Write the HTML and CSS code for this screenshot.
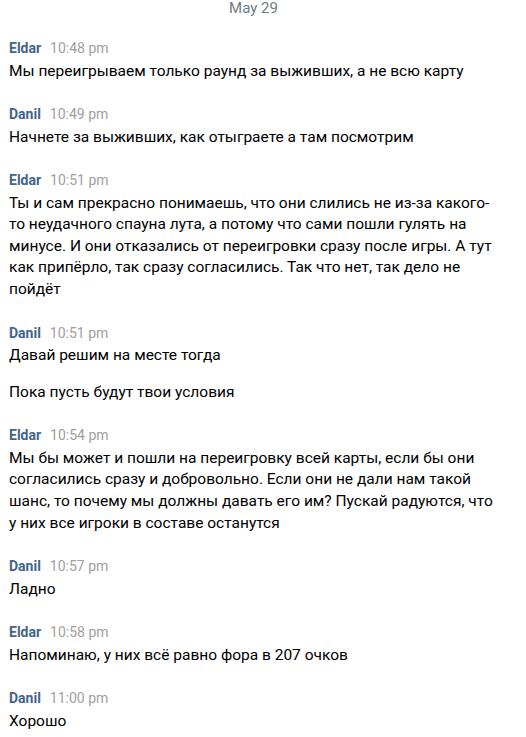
FILE: index.html
```html
<!DOCTYPE html>
<html lang="ru">
<head>
<meta charset="utf-8">
<link rel="stylesheet" href="styles.css">
</head>
<body>
<div class="chat">
  <div class="date">May 29</div>

  <div class="msg">
    <div class="head"><span class="name">Eldar</span><span class="time">10:48 pm</span></div>
    <p class="text">Мы переигрываем только раунд за выживших, а не всю карту</p>
  </div>

  <div class="msg">
    <div class="head"><span class="name">Danil</span><span class="time">10:49 pm</span></div>
    <p class="text">Начнете за выживших, как отыграете а там посмотрим</p>
  </div>

  <div class="msg">
    <div class="head"><span class="name">Eldar</span><span class="time">10:51 pm</span></div>
    <p class="text">Ты и сам прекрасно понимаешь, что они слились не из-за какого-то неудачного спауна лута, а потому что сами пошли гулять на минусе. И они отказались от переигровки сразу после игры. А тут как припёрло, так сразу согласились. Так что нет, так дело не пойдёт</p>
  </div>

  <div class="msg">
    <div class="head"><span class="name">Danil</span><span class="time">10:51 pm</span></div>
    <p class="text">Давай решим на месте тогда</p>
    <p class="text more">Пока пусть будут твои условия</p>
  </div>

  <div class="msg">
    <div class="head"><span class="name">Eldar</span><span class="time">10:54 pm</span></div>
    <p class="text">Мы бы может и пошли на переигровку всей карты, если бы они согласились сразу и добровольно. Если они не дали нам такой шанс, то почему мы должны давать его им? Пускай радуются, что у них все игроки в составе останутся</p>
  </div>

  <div class="msg">
    <div class="head"><span class="name">Danil</span><span class="time">10:57 pm</span></div>
    <p class="text">Ладно</p>
  </div>

  <div class="msg">
    <div class="head"><span class="name">Eldar</span><span class="time">10:58 pm</span></div>
    <p class="text">Напоминаю, у них всё равно фора в 207 очков</p>
  </div>

  <div class="msg">
    <div class="head"><span class="name">Danil</span><span class="time">11:00 pm</span></div>
    <p class="text">Хорошо</p>
  </div>
</div>
</body>
</html>
```

FILE: styles.css
```css
html, body {
  margin: 0;
  padding: 0;
  background: #ffffff;
}

body {
  font-family: Roboto, "Noto Sans", "Liberation Sans", sans-serif;
  color: #000000;
}

.chat {
  width: 491px;
  padding: 0 0 0 9px;
  display: flex;
  flex-direction: column;
  gap: 22px;
}

.date {
  text-align: center;
  font-size: 15px;
  line-height: 16px;
  color: #6d7b8a;
  padding-right: 2px;
}

.msg {
  display: flex;
  flex-direction: column;
}

.head {
  display: flex;
  align-items: baseline;
  gap: 9px;
  height: 20px;
  line-height: 20px;
  margin-bottom: 2.5px;
}

.name {
  font-size: 14px;
  font-weight: 700;
  color: #42648b;
}

.time {
  font-size: 14px;
  color: #a0a0a0;
}

.text {
  margin: 0;
  font-size: 15.5px;
  line-height: 21.6px;
  color: #000000;
}

.text.more {
  margin-top: 15px;
}
```
